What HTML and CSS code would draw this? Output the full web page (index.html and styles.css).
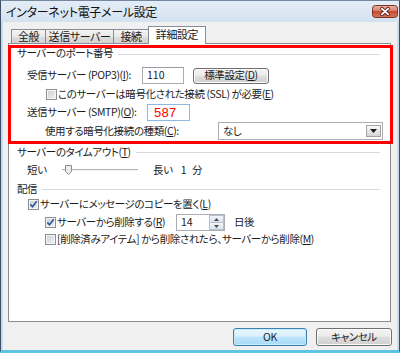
FILE: index.html
```html
<!DOCTYPE html>
<html lang="ja">
<head>
<meta charset="utf-8">
<title>インターネット電子メール設定</title>
<link rel="stylesheet" href="styles.css">
</head>
<body>
<div class="window">
  <div class="titlebar">
    <span class="title">インターネット電子メール設定</span>
    <span class="close">
      <svg width="26" height="13" viewBox="0 0 26 13">
        <defs>
          <linearGradient id="cg" x1="0" y1="0" x2="0" y2="1">
            <stop offset="0" stop-color="#eab2a6"/>
            <stop offset="0.45" stop-color="#d9806c"/>
            <stop offset="0.5" stop-color="#c64a33"/>
            <stop offset="1" stop-color="#d8775c"/>
          </linearGradient>
        </defs>
        <rect x="0.5" y="0.5" width="25" height="12" rx="3" fill="url(#cg)" stroke="#7a3328"/>
        <path d="M9.8 3.6 L16.2 9.4 M16.2 3.6 L9.8 9.4" stroke="#5a2119" stroke-width="3.4" stroke-linecap="round"/>
        <path d="M9.8 3.6 L16.2 9.4 M16.2 3.6 L9.8 9.4" stroke="#ffffff" stroke-width="1.8" stroke-linecap="round"/>
      </svg>
    </span>
  </div>
  <div class="frame">
    <div class="client">
      <div class="tabs">
        <div class="tab tab-1">全般</div>
        <div class="tab tab-2">送信サーバー</div>
        <div class="tab tab-3">接続</div>
        <div class="tab tab-4 active">詳細設定</div>
      </div>
      <div class="panel">
        <div class="group-hl">
          <div class="legend legend-in"><span>サーバーのポート番号</span><i class="rule"></i></div>
          <div class="row row-pop">
            <span class="label lbl-pop">受信サーバー (POP3)(<u>I</u>):</span>
            <span class="field f-pop">110</span>
            <span class="btn btn-std">標準設定(<u>D</u>)</span>
          </div>
          <div class="row row-ssl">
            <span class="check ck-in"></span>
            <span class="ctext">このサーバーは暗号化された接続 (SSL) が必要(<u>E</u>)</span>
          </div>
          <div class="row row-smtp">
            <span class="label lbl-smtp">送信サーバー (SMTP)(<u>O</u>):</span>
            <span class="field f-smtp">587</span>
          </div>
          <div class="row row-enc">
            <span class="label lbl-enc">使用する暗号化接続の種類(<u>C</u>):</span>
            <span class="select"><span class="sel-val">なし</span>
              <span class="drop">
                <svg width="7" height="4" viewBox="0 0 7 4"><path d="M0 0 H7 L3.5 4 Z" fill="#1a1a1a"/></svg>
              </span>
            </span>
          </div>
        </div>

        <div class="legend legend-out legend-timeout"><span>サーバーのタイムアウト(<u>T</u>)</span><i class="rule"></i></div>
        <div class="row row-slider">
          <span class="s-short">短い</span>
          <span class="slider">
            <svg width="76" height="16" viewBox="0 0 76 16">
              <line x1="0" y1="7.5" x2="76" y2="7.5" stroke="#b4b4b4"/>
              <line x1="0" y1="8.5" x2="76" y2="8.5" stroke="#f4f4f4"/>
              <path d="M3.5 3.5 H9.5 V9.5 L6.5 12.5 L3.5 9.5 Z" fill="#ececec" stroke="#8c8c8c"/>
            </svg>
          </span>
          <span class="s-long">長い</span>
          <span class="s-num">1</span>
          <span class="s-unit">分</span>
        </div>

        <div class="legend legend-out legend-deliver"><span>配信</span><i class="rule"></i></div>
        <div class="row row-c1">
          <span class="check checked ck-1">
            <svg width="9" height="9" viewBox="0 0 9 9"><path d="M1.3 4.4 L3.5 6.8 L7.8 1.2" fill="none" stroke="#2d5aa6" stroke-width="1.7"/></svg>
          </span>
          <span class="ctext">サーバーにメッセージのコピーを置く(<u>L</u>)</span>
        </div>
        <div class="row row-c2">
          <span class="check checked ck-2">
            <svg width="9" height="9" viewBox="0 0 9 9"><path d="M1.3 4.4 L3.5 6.8 L7.8 1.2" fill="none" stroke="#2d5aa6" stroke-width="1.7"/></svg>
          </span>
          <span class="ctext ct-del">サーバーから削除する(<u>R</u>)</span>
          <span class="spin">
            <span class="spin-val">14</span>
            <span class="spin-btns">
              <span class="sb"><svg width="5" height="3" viewBox="0 0 5 3"><path d="M0 3 H5 L2.5 0 Z" fill="#4a4a4a"/></svg></span>
              <span class="sb"><svg width="5" height="3" viewBox="0 0 5 3"><path d="M0 0 H5 L2.5 3 Z" fill="#4a4a4a"/></svg></span>
            </span>
          </span>
          <span class="days">日後</span>
        </div>
        <div class="row row-c3">
          <span class="check ck-3"></span>
          <span class="ctext">[削除済みアイテム] から削除されたら、サーバーから削除(<u>M</u>)</span>
        </div>
      </div>
      <div class="buttons">
        <span class="btn btn-ok">OK</span>
        <span class="btn btn-cancel">キャンセル</span>
      </div>
    </div>
  </div>
</div>
</body>
</html>
```
FILE: styles.css
```css
* { box-sizing: border-box; }
html, body { margin: 0; padding: 0; }
body {
  width: 400px;
  height: 353px;
  overflow: hidden;
  font-family: "Noto Sans CJK JP", "Noto Sans", sans-serif;
  font-size: 10.5px;
  letter-spacing: -0.4px;
  color: #1b1b1b;
  font-feature-settings: "palt" 1;
  background: #ffffff;
}
u { text-decoration: underline; text-underline-offset: 1px; }

.window {
  width: 400px;
  height: 353px;
  display: flex;
  flex-direction: column;
  background: #c4d8ec;
  border: 1px solid #3d4f64;
  border-top-color: #73889e;
  border-bottom: 3px solid #5cc6e4;
}
.titlebar {
  height: 21px;
  flex: none;
  display: flex;
  align-items: center;
  padding: 0 1px 0 5px;
  background: linear-gradient(#e4edf7, #d4e2f0);
}
.title {
  font-size: 12px;
  letter-spacing: -0.3px;
  line-height: 1;
  color: #111;
  white-space: nowrap;
  padding-top: 1px;
}
.close {
  margin-left: auto;
  width: 26px;
  height: 13px;
  display: flex;
}

.frame {
  flex: 1;
  display: flex;
  padding: 0 2px;
  background: #c9dcef;
}
.client {
  flex: 1;
  display: flex;
  flex-direction: column;
  background: #f0f0f0;
  padding: 4px 6px 0 5px;
}

/* tabs */
.tabs {
  height: 17px;
  flex: none;
  display: flex;
  align-items: flex-end;
  margin-left: 3px;
}
.tab {
  height: 14px;
  border: 1px solid #898c95;
  border-bottom: none;
  background: linear-gradient(#f4f4f4, #e8e8e8 50%, #dcdcdc 51%, #d4d4d4);
  display: flex;
  align-items: center;
  justify-content: center;
  white-space: nowrap;
  line-height: 1;
  margin-left: -1px;
  font-size: 11px;
}
.tab-1 { width: 35px; margin-left: 0; }
.tab-2 { width: 69px; }
.tab-3 { width: 36px; }
.tab-4 { width: 58px; }
.tab.active {
  height: 18px;
  background: #ffffff;
  margin-bottom: -1px;
  position: relative;
  z-index: 1;
  padding-bottom: 2px;
}

/* panel */
.panel {
  height: 279px;
  flex: none;
  border: 1px solid #898c95;
  background: #ffffff;
}
.group-hl {
  margin: 1px -3px 0 -1px;
  height: 99px;
  border: 3px solid #ff0000;
}

.legend {
  height: 11px;
  display: flex;
  align-items: center;
  white-space: nowrap;
  line-height: 1;
}
.legend .rule {
  flex: 1;
  height: 1px;
  background: #d5dbe0;
  margin: 1px 10px 0 5px;
}
.legend-in { padding-left: 6px; }
.legend-out { padding-left: 8px; height: 12px; }
.legend-timeout { margin-top: 2px; }
.legend-deliver { margin-top: 5px; }

.row {
  display: flex;
  align-items: center;
  white-space: nowrap;
  line-height: 1;
}
.label { flex: none; }

.row-pop { height: 17px; margin-top: 8px; }
.lbl-pop { margin-left: 16px; width: 115px; }
.field {
  height: 17px;
  border: 1px solid #abadb3;
  border-top-color: #9a9ca2;
  background: #fff;
  display: flex;
  align-items: center;
  padding-left: 4px;
  letter-spacing: 0;
}
.f-pop { width: 42px; }
.btn {
  display: flex;
  align-items: center;
  justify-content: center;
  border: 1px solid #707070;
  border-radius: 3px;
  background: linear-gradient(#f3f3f3, #ececec 45%, #dddddd 50%, #d0d0d0);
  box-shadow: inset 0 0 0 1px #fbfbfb;
  white-space: nowrap;
  line-height: 1;
}
.btn-std { margin-left: 9px; width: 76px; height: 16px; }

.row-ssl { height: 12px; margin-top: 4px; }
.check {
  flex: none;
  width: 11px;
  height: 11px;
  border: 1px solid #8e8f8f;
  background: linear-gradient(135deg, #c9ccd2, #f3f3f3);
  box-shadow: inset 0 0 0 1px #f5f5f5;
  display: flex;
  align-items: center;
  justify-content: center;
}
.ck-in { margin-left: 35px; }
.ctext { margin-left: 1px; }

.row-smtp { height: 17px; margin-top: 4px; }
.lbl-smtp { margin-left: 16px; width: 120px; }
.f-smtp {
  width: 43px;
  border-color: #8fb7e0;
  padding-left: 6px;
  color: #ff0000;
  font-family: "Liberation Sans", Arial, sans-serif;
  font-size: 13px;
  letter-spacing: 0.3px;
}

.row-enc { height: 18px; margin-top: 1px; }
.lbl-enc { margin-left: 34px; width: 173px; }
.select {
  width: 165px;
  height: 18px;
  border: 1px solid #abadb3;
  background: #fff;
  display: flex;
  align-items: center;
  padding-left: 4px;
}
.drop {
  margin-left: auto;
  margin-right: 1px;
  width: 15px;
  height: 12px;
  border: 1px solid #a3a3a3;
  background: linear-gradient(#fafafa, #e6e6e6 50%, #d6d6d6);
  display: flex;
  align-items: center;
  justify-content: center;
}

/* slider */
.row-slider { height: 16px; margin-top: 4px; }
.s-short { margin-left: 18px; width: 35px; }
.slider { display: flex; width: 76px; height: 16px; }
.s-long { margin-left: 15px; }
.s-num { margin-left: 8px; }
.s-unit { margin-left: 6px; }

/* delivery */
.row-c1 { height: 13px; margin-top: 3px; }
.ck-1 { margin-left: 19px; }
.row-c2 { height: 17px; margin-top: 3px; }
.ck-2 { margin-left: 36px; }
.ct-del { width: 119px; }
.spin {
  width: 49px;
  height: 17px;
  border: 1px solid #abadb3;
  background: #fff;
  display: flex;
}
.spin-val { padding-left: 4px; display: flex; align-items: center; flex: 1; letter-spacing: 0; }
.spin-btns { width: 15px; display: flex; flex-direction: column; }
.sb {
  flex: 1;
  display: flex;
  align-items: center;
  justify-content: center;
  border: 1px solid #b6c2d0;
  background: linear-gradient(#f2f6fa, #d9e2ec);
}
.sb + .sb { border-top: none; }
.days { margin-left: 9px; }
.row-c3 { height: 12px; margin-top: 2px; }
.ck-3 { margin-left: 36px; }

/* bottom buttons */
.buttons {
  display: flex;
  justify-content: flex-end;
  gap: 9px;
  margin-top: 6px;
  margin-right: -1px;
}
.btn-ok {
  width: 74px;
  height: 18px;
  border-color: #3c7fb1;
  background: linear-gradient(#eaf6fd, #d9f0fc 45%, #bee6fd 50%, #a7d9f5);
  box-shadow: inset 0 0 0 1px #c9ecfb;
}
.btn-cancel { width: 76px; height: 18px; }
```
